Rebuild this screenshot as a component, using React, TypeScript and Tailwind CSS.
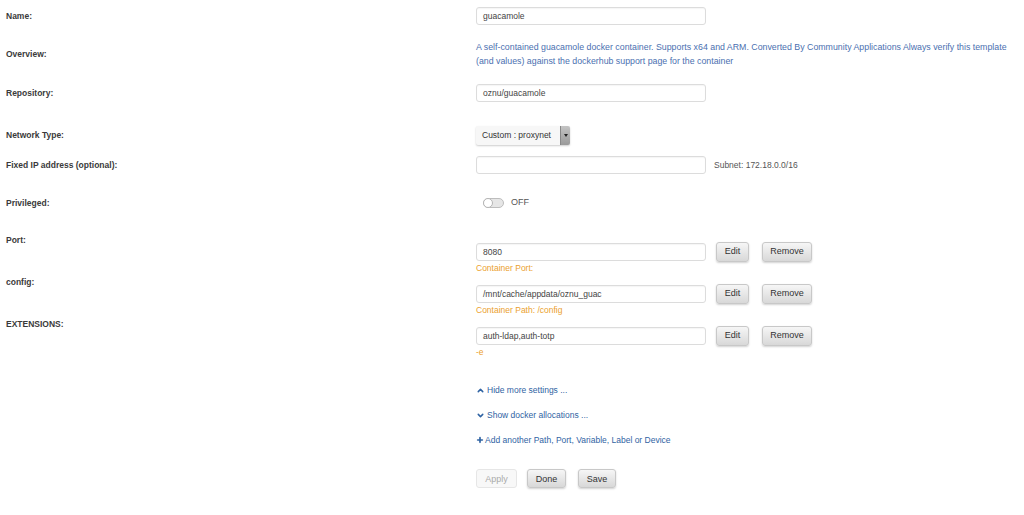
import { ChevronUp, ChevronDown, Plus } from 'lucide-react';

const btn =
  'h-[20px] rounded-[3px] border border-[#c8c8c8] bg-linear-to-b from-[#f6f6f6] to-[#d8d8d8] shadow-[0_1px_2px_rgba(0,0,0,0.18)] text-[9px] text-[#333] flex items-center justify-center';

function Label({ children }: { children: React.ReactNode }) {
  return <div className="w-[476px] shrink-0 pl-[6px] font-bold text-[#3a3a3a]">{children}</div>;
}

function TextBox({ value }: { value: string }) {
  return (
    <div className="w-[230px] h-[18px] shrink-0 border border-[#dcdcdc] rounded-[3px] bg-white px-[6px] flex items-center text-[#444] shadow-[inset_0_1px_1px_rgba(0,0,0,0.04)]">
      {value}
    </div>
  );
}

function MappedRow({ label, value, hint }: { label: string; value: string; hint: string }) {
  return (
    <div className="flex items-start h-[42px]">
      <Label>
        <div className="leading-[14px]">{label}</div>
      </Label>
      <div className="pt-[9px]">
        <div className="flex items-center">
          <TextBox value={value} />
          <div className={`${btn} ml-[10px] w-[33px]`}>Edit</div>
          <div className={`${btn} ml-[13px] w-[50px]`}>Remove</div>
        </div>
        <div className="text-[#eb9f2e] leading-[11px] mt-[1px]">{hint}</div>
      </div>
    </div>
  );
}

export default function App() {
  return (
    <div className="w-[1024px] h-[515px] bg-white font-['Liberation_Sans',Arial,sans-serif] text-[8.5px] text-[#444] pt-[7px]">
      <div className="flex items-center h-[18px]">
        <Label>Name:</Label>
        <TextBox value="guacamole" />
      </div>

      <div className="flex items-center h-[28px] mt-[15px]">
        <Label>Overview:</Label>
        <div className="pr-[10px] leading-[14px] text-[8.8px] text-[#4a6fb0]">
          A self-contained guacamole docker container. Supports x64 and ARM. Converted By Community Applications Always verify this template (and values) against the dockerhub support page for the container
        </div>
      </div>

      <div className="flex items-center h-[18px] mt-[16px]">
        <Label>Repository:</Label>
        <TextBox value="oznu/guacamole" />
      </div>

      <div className="flex items-center h-[18px] mt-[24px]">
        <Label>Network Type:</Label>
        <div className="flex w-[94px] h-[19px] rounded-[2px] bg-[#f7f7f7] shadow-[0_1px_2px_rgba(0,0,0,0.2)]">
          <div className="flex-1 flex items-center pl-[6px] text-[#333]">Custom : proxynet</div>
          <div className="w-[10px] flex items-center justify-center bg-linear-to-b from-[#c4c4c4] to-[#9a9a9a] border-l border-[#888] rounded-r-[2px]">
            <div className="w-0 h-0 border-l-[2px] border-r-[2px] border-t-[3px] border-l-transparent border-r-transparent border-t-[#222]" />
          </div>
        </div>
      </div>

      <div className="flex items-center h-[18px] mt-[12px]">
        <Label>Fixed IP address (optional):</Label>
        <TextBox value="" />
        <div className="ml-[8px] text-[#555]">Subnet: 172.18.0.0/16</div>
      </div>

      <div className="flex items-center h-[18px] mt-[20px]">
        <Label>Privileged:</Label>
        <div className="ml-[7px] w-[21px] h-[10px] rounded-full border border-[#bdbdbd] bg-[#e6e6e6] relative">
          <div className="absolute -left-px -top-px w-[10px] h-[10px] rounded-full bg-white border border-[#b5b5b5]" />
        </div>
        <div className="ml-[7px] text-[9px] text-[#555]">OFF</div>
      </div>

      <div className="mt-[21px]">
        <MappedRow label="Port:" value="8080" hint="Container Port:" />
        <MappedRow label="config:" value="/mnt/cache/appdata/oznu_guac" hint="Container Path: /config" />
        <MappedRow label="EXTENSIONS:" value="auth-ldap,auth-totp" hint="-e" />
      </div>

      <div className="pl-[476px] text-[#2f63a3] leading-[14px]">
        <div className="mt-[24px] flex items-center gap-[2px]">
          <ChevronUp className="w-[9px] h-[9px]" strokeWidth={4} />
          <span>Hide more settings ...</span>
        </div>
        <div className="mt-[11px] flex items-center gap-[2px]">
          <ChevronDown className="w-[9px] h-[9px]" strokeWidth={4} />
          <span>Show docker allocations ...</span>
        </div>
        <div className="mt-[11px] flex items-center gap-[1px]">
          <Plus className="w-[8px] h-[8px]" strokeWidth={5} />
          <span>Add another Path, Port, Variable, Label or Device</span>
        </div>
        <div className="mt-[22px] flex items-center">
          <div className="h-[19px] w-[41px] rounded-[3px] border border-[#e6e6e6] bg-[#f8f8f8] text-[9px] text-[#aaa] flex items-center justify-center">
            Apply
          </div>
          <div className={`${btn} !h-[19px] ml-[10px] w-[39px]`}>Done</div>
          <div className={`${btn} !h-[19px] ml-[12px] w-[38px]`}>Save</div>
        </div>
      </div>
    </div>
  );
}
